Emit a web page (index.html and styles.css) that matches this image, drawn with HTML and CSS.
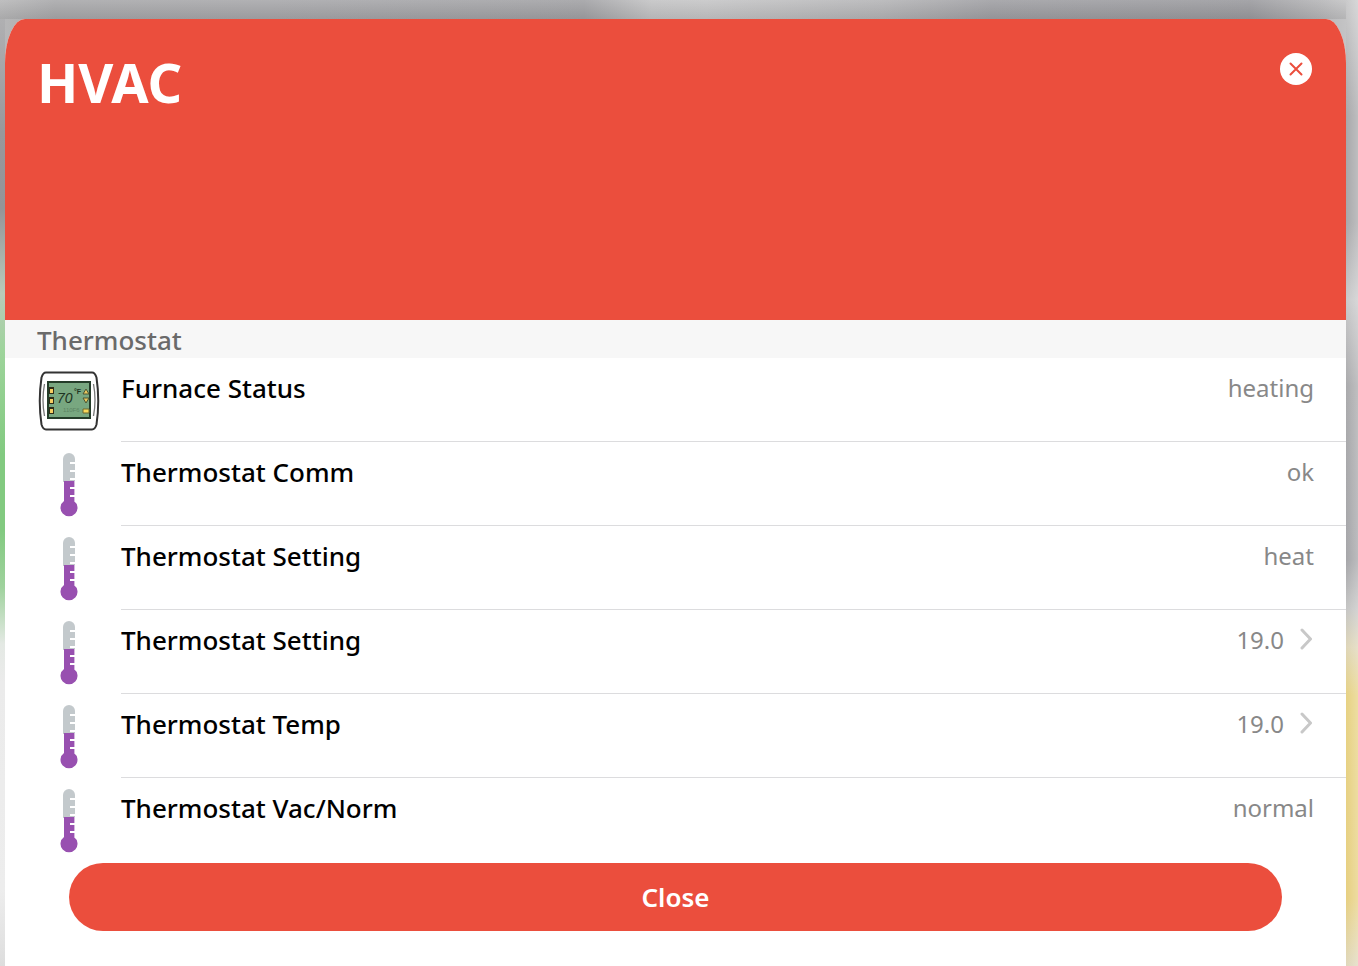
FILE: index.html
```html
<!DOCTYPE html>
<html lang="en">
<head>
<meta charset="utf-8">
<meta name="viewport" content="width=device-width, initial-scale=1">
<title>HVAC</title>
<link rel="stylesheet" href="styles.css">
</head>
<body>
<svg class="sprite" aria-hidden="true">
  <symbol id="thermometer" viewBox="0 0 18 66">
    <path d="M3 30V7a6 6 0 0 1 12 0v23z" fill="#c3c9cc"/>
    <path d="M4 29h10v20a8.500 8.500 0 1 1-10 0z" fill="#9850b0"/>
    <path d="M14 29h1v20h-1z" fill="#d5b9df"/>
    <path d="M10 11h5M10 19h5M10 27h5M10 36h5M10 44h5" stroke="#fff" stroke-width="2"/>
  </symbol>
  <symbol id="chevron" viewBox="0 0 12 22">
    <path d="M2 2l8.500 9L2 20" fill="none" stroke="#c8c8c8" stroke-width="3" stroke-linecap="round" stroke-linejoin="round"/>
  </symbol>
</svg>
<main class="panel">
  <header class="hero">
    <h1 class="hero-title">HVAC</h1>
    <button class="dismiss" type="button" aria-label="Dismiss">
      <svg viewBox="0 0 32 32" aria-hidden="true"><path d="M10.500 10.500l11 11m0-11l-11 11" stroke="#eb4e3d" stroke-width="2" stroke-linecap="round"/></svg>
    </button>
  </header>
  <h2 class="section">Thermostat</h2>
  <ul class="rows">
    <li class="row">
      <svg class="icon" viewBox="0 0 64 64" aria-hidden="true">
        <path d="M9 3.500h46q3 0 4.500 5q3.500 23.500 0 47q-1.500 5-4.500 5H9q-3 0-4.500-5q-3.500-23.500 0-47q1.500-5 4.500-5z" fill="#fff" stroke="#333" stroke-width="2"/>
        <path d="M7.500 15Q4.500 31 7.500 47M56.500 15Q59.500 31 56.500 47" fill="none" stroke="#777" stroke-width="1.300"/>
        <rect x="11" y="13" width="42" height="36" fill="#78a780" stroke="#243c29" stroke-width="2"/>
        <path d="M12 18h5v7h-5zM12 28h5v7h-5zM12 38h5v7h-5z" fill="#302d18"/>
        <path d="M13 20h3v4h-3zM13 30h3v4h-3zM13 40h3v4h-3z" fill="#f5ce62"/>
        <path d="M46 25l3-5 3 5zM46 29h6l-3 5z" fill="#eac65d" stroke="#4b5532"/>
        <path d="M46 40h6v4h-6z" fill="#f8d85a" stroke="#6d6930"/>
        <text class="lcd" x="20" y="34">70</text>
        <text class="lcd-unit" x="37" y="25">°F</text>
        <text class="lcd-note" x="26" y="43">110F6</text>
      </svg>
      <div class="row-body"><span class="label">Furnace Status</span><span class="value">heating</span></div>
    </li>
    <li class="row">
      <svg class="icon" aria-hidden="true"><use href="#thermometer"/></svg>
      <div class="row-body"><span class="label">Thermostat Comm</span><span class="value">ok</span></div>
    </li>
    <li class="row">
      <svg class="icon" aria-hidden="true"><use href="#thermometer"/></svg>
      <div class="row-body"><span class="label">Thermostat Setting</span><span class="value">heat</span></div>
    </li>
    <li class="row">
      <svg class="icon" aria-hidden="true"><use href="#thermometer"/></svg>
      <div class="row-body"><span class="label">Thermostat Setting</span><span class="value">19.0</span><svg class="chevron" aria-hidden="true"><use href="#chevron"/></svg></div>
    </li>
    <li class="row">
      <svg class="icon" aria-hidden="true"><use href="#thermometer"/></svg>
      <div class="row-body"><span class="label">Thermostat Temp</span><span class="value">19.0</span><svg class="chevron" aria-hidden="true"><use href="#chevron"/></svg></div>
    </li>
    <li class="row">
      <svg class="icon" aria-hidden="true"><use href="#thermometer"/></svg>
      <div class="row-body"><span class="label">Thermostat Vac/Norm</span><span class="value">normal</span></div>
    </li>
  </ul>
  <button class="close" type="button">Close</button>
</main>
</body>
</html>
```

FILE: styles.css
```css
* { box-sizing: border-box; }

body {
  margin: 0;
  min-height: 100vh;
  display: flex;
  padding: 19px 12px 0 5px;
  font-family: "Noto Sans", "Open Sans", sans-serif;
  background:
    linear-gradient(#b0b0b2 0, #98989b 12%, #949498 20%, #b9cbba 29%, #9ed49b 35%, #82ca80 46%, #82ca80 54%, #9fd29d 60%, #e4e9e4 66%, #ebebeb 70%, #ededed 92%, #dddddd 100%) left 19px / 5px calc(100% - 19px) no-repeat,
    linear-gradient(to right, transparent, rgba(255, 255, 255, 0.25)) right top / 12px 100% no-repeat,
    linear-gradient(#cacacb 0, #a8a8aa 12%, #a8a8aa 23%, #cacacb 31%, #aaaaac 40%, #a6a6a9 58%, #c5c5c4 63%, #dfd6b8 67%, #e7d283 72%, #e7d081 93%, #e0d8bd 100%) right top / 12px 100% no-repeat,
    linear-gradient(rgba(255, 255, 255, 0.1), rgba(0, 0, 0, 0.08)) left top / 100% 19px no-repeat,
    linear-gradient(to right, #b8b8b9 0, #a9a9ab 4%, #a8a8ab 20%, #a2a2a5 43%, #c4c4c5 48%, #c6c6c7 52%, #b5b5b7 65%, #a0a0a4 73%, #9b9b9f 92%, #b5b5b7 97%, #cacacb 100%) left top / 100% 24% no-repeat,
    #ececec;
}

.sprite { position: absolute; width: 0; height: 0; }

.panel {
  flex: 1;
  min-width: 0;
  background: #fff;
  border-radius: 20px 20px 0 0 / 44px 44px 0 0;
  overflow: hidden;
}

.hero {
  display: flex;
  justify-content: space-between;
  align-items: flex-start;
  min-height: 301px;
  padding: 34px 34px 0 32px;
  background: #eb4e3d;
  color: #fff;
}

.hero-title { margin: 0; font-size: 54px; line-height: 58px; font-weight: 700; }

.dismiss {
  width: 32px;
  height: 32px;
  padding: 0;
  border: 0;
  border-radius: 50%;
  background: #fff;
}

.dismiss svg { display: block; }

.section {
  margin: 0;
  padding: 0 32px;
  background: #f7f7f7;
  color: #6a6a6a;
  font-size: 26px;
  line-height: 40px;
  height: 38px;
  font-weight: 500;
}

.rows { margin: 0; padding: 0; list-style: none; }

.row { display: flex; gap: 20px; padding-left: 32px; min-height: 84px; }

.icon { flex: none; width: 64px; height: 66px; margin-top: 10px; }

.row-body {
  flex: 1;
  display: flex;
  align-items: flex-start;
  padding: 10px 32px 0 0;
  border-bottom: 1px solid #dcdcde;
  line-height: 40px;
}

.row:last-child .row-body { border-bottom: 0; }

.label { flex: 1; color: #000; font-size: 26px; font-weight: 500; }

.value { color: #888; font-size: 24px; font-weight: 400; }

.chevron { width: 12px; height: 22px; margin: 8px 2px 0 16px; }

.close {
  display: block;
  width: calc(100% - 128px);
  height: 68px;
  margin: 1px 64px 35px;
  padding: 0;
  border: 0;
  border-radius: 34px;
  background: #eb4e3d;
  color: #fff;
  font: 600 26px/68px "Noto Sans", "Open Sans", sans-serif;
}

.lcd { font: italic 400 14px "Liberation Sans", sans-serif; fill: #1d3322; }
.lcd-unit { font: 700 7px "Liberation Sans", sans-serif; fill: #1d3322; }
.lcd-note { font: 400 6px "Liberation Sans", sans-serif; fill: #5c8463; }
```
